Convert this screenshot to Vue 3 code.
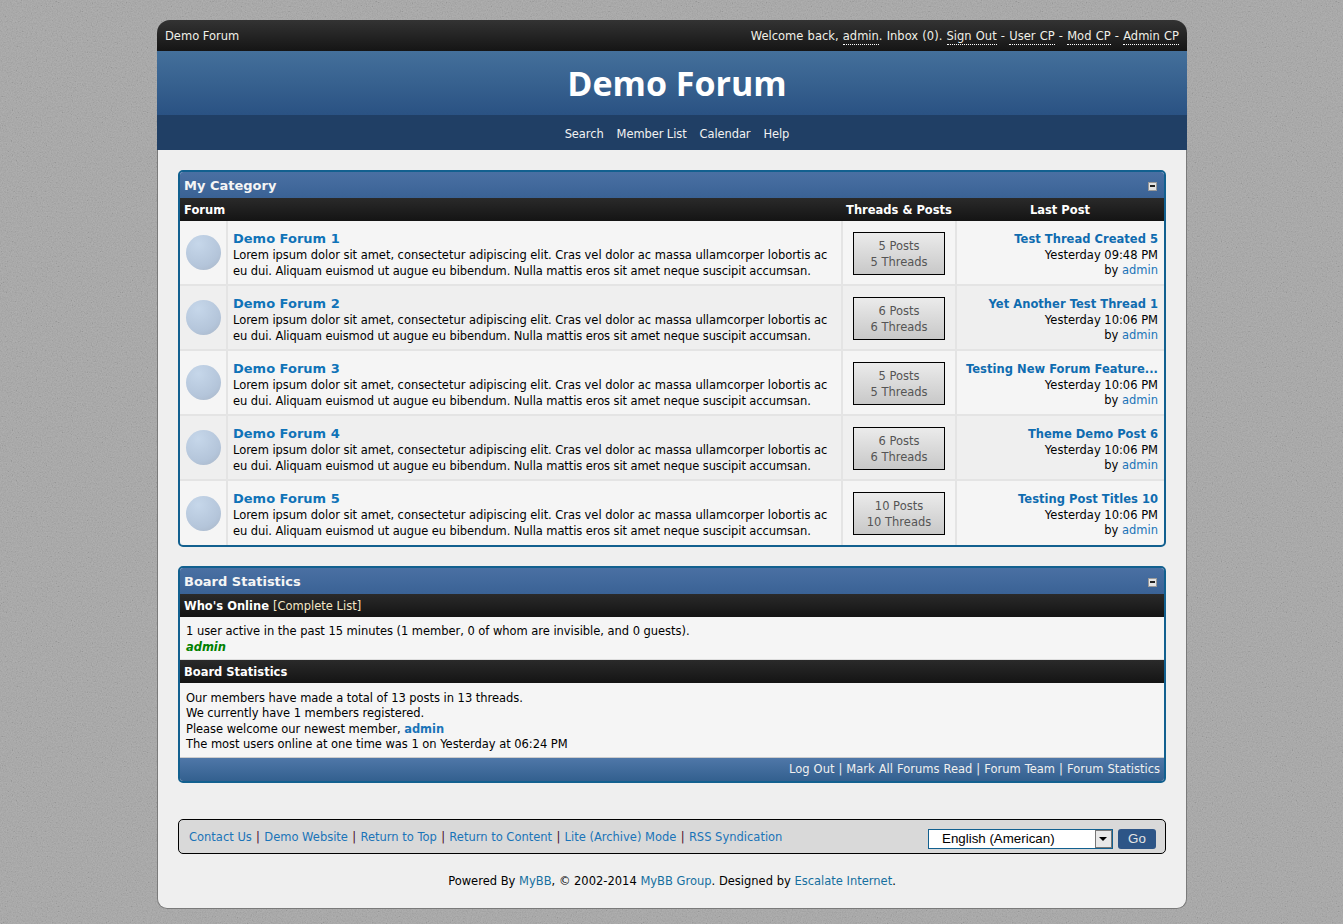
<template>
  <svg class="noise" aria-hidden="true">
    <filter id="grain" x="0" y="0" width="100%" height="100%">
      <feTurbulence type="fractalNoise" baseFrequency="0.8" numOctaves="2" seed="4" />
      <feColorMatrix type="matrix" values="1 1 0 0 -0.5  1 1 0 0 -0.5  1 1 0 0 -0.5  0 0 0 0 1" />
    </filter>
    <rect width="100%" height="100%" filter="url(#grain)" />
  </svg>
  <div class="wrapper">
    <div class="panel">
      <span class="panel-title">Demo Forum</span>
      <span class="welcome">
        Welcome back, <a class="dotted">admin</a>. Inbox (0). <a class="dotted">Sign Out</a> -
        <a class="dotted">User CP</a> - <a class="dotted">Mod CP</a> - <a class="dotted">Admin CP</a>
      </span>
    </div>
    <div class="logo">Demo Forum</div>
    <div class="menu">
      <a v-for="m in menu" :key="m">{{ m }}</a>
    </div>

    <div class="content">
      <div class="tborder">
        <div class="thead">
          <strong>My Category</strong>
          <span class="collapse"></span>
        </div>
        <div class="tcat forum-cols">
          <span>Forum</span>
          <span class="center">Threads &amp; Posts</span>
          <span class="center">Last Post</span>
        </div>
        <div
          v-for="(f, i) in forums"
          :key="f.name"
          class="forum-row"
          :class="i % 2 ? 'alt' : ''"
        >
          <div class="cell icon-cell"><span class="bulb"></span></div>
          <div class="cell desc-cell">
            <a class="forum-name">{{ f.name }}</a>
            <div class="lorem1">{{ lorem[0] }}</div>
            <div class="lorem2">{{ lorem[1] }}</div>
          </div>
          <div class="cell count-cell">
            <div class="count-box">
              <div>{{ f.posts }} Posts</div>
              <div>{{ f.posts }} Threads</div>
            </div>
          </div>
          <div class="cell last-cell">
            <a class="last-title">{{ f.last }}</a>
            <div>{{ f.time }}</div>
            <div>by <a class="blue">admin</a></div>
          </div>
        </div>
      </div>

      <div class="tborder stats">
        <div class="thead">
          <strong>Board Statistics</strong>
          <span class="collapse"></span>
        </div>
        <div class="tcat"><strong>Who's Online</strong> <span class="complete">[Complete List]</span></div>
        <div class="trow online">
          1 user active in the past 15 minutes (1 member, 0 of whom are invisible, and 0 guests).
          <div class="green">admin</div>
        </div>
        <div class="tcat"><strong>Board Statistics</strong></div>
        <div class="trow board">
          <div>Our members have made a total of 13 posts in 13 threads.</div>
          <div>We currently have 1 members registered.</div>
          <div>Please welcome our newest member, <a class="blue bold">admin</a></div>
          <div>The most users online at one time was 1 on Yesterday at 06:24 PM</div>
        </div>
        <div class="tfoot">Log Out | Mark All Forums Read | Forum Team | Forum Statistics</div>
      </div>

      <div class="footer-bar">
        <div class="foot-links">
          <template v-for="(l, i) in footLinks" :key="l">
            <a class="blue">{{ l }}</a><span v-if="i < footLinks.length - 1" class="sep">|</span>
          </template>
        </div>
        <div class="lang">
          <div class="select">
            <span>English (American)</span>
            <span class="arrow"></span>
          </div>
          <div class="go">Go</div>
        </div>
      </div>

      <div class="copyright">
        Powered By <a class="blue2">MyBB</a>, © 2002-2014 <a class="blue2">MyBB Group</a>. Designed by
        <a class="blue2">Escalate Internet</a>.
      </div>
    </div>
  </div>
</template>

<script setup>
const menu = ['Search', 'Member List', 'Calendar', 'Help']
const lorem = [
  'Lorem ipsum dolor sit amet, consectetur adipiscing elit. Cras vel dolor ac massa ullamcorper lobortis ac',
  'eu dui. Aliquam euismod ut augue eu bibendum. Nulla mattis eros sit amet neque suscipit accumsan.'
]
const forums = [
  { name: 'Demo Forum 1', posts: 5, last: 'Test Thread Created 5', time: 'Yesterday 09:48 PM' },
  { name: 'Demo Forum 2', posts: 6, last: 'Yet Another Test Thread 1', time: 'Yesterday 10:06 PM' },
  { name: 'Demo Forum 3', posts: 5, last: 'Testing New Forum Feature...', time: 'Yesterday 10:06 PM' },
  { name: 'Demo Forum 4', posts: 6, last: 'Theme Demo Post 6', time: 'Yesterday 10:06 PM' },
  { name: 'Demo Forum 5', posts: 10, last: 'Testing Post Titles 10', time: 'Yesterday 10:06 PM' }
]
const footLinks = ['Contact Us', 'Demo Website', 'Return to Top', 'Return to Content', 'Lite (Archive) Mode', 'RSS Syndication']
</script>

<style>
html {
  background: #a8a8a8;
}
body {
  margin: 0;
}
</style>

<style scoped>
.noise {
  position: fixed;
  inset: 0;
  width: 100%;
  height: 100%;
  opacity: 0.1;
  z-index: -1;
}
.wrapper {
  width: 1030px;
  margin: 20px 0 15px 157px;
  font-family: "DejaVu Sans", Verdana, sans-serif;
  font-size: 11.5px;
  color: #000;
}
.panel {
  height: 31px;
  box-sizing: border-box;
  padding: 0 8px;
  display: flex;
  justify-content: space-between;
  align-items: center;
  border-radius: 13px 13px 0 0;
  background: linear-gradient(#333, #151515);
  color: #f0f0e8;
}
.welcome {
  word-spacing: 0.55px;
}
.dotted {
  border-bottom: 1px dotted #fff;
  padding-bottom: 1px;
}
.logo {
  height: 64px;
  padding-left: 10px;
  background: linear-gradient(#44709b, #2a5283);
  color: #fff;
  font-family: "Open Sans", sans-serif;
  font-weight: 700;
  font-size: 34px;
  line-height: 64px;
  text-align: center;
}
.menu {
  height: 35px;
  background: #203f65;
  color: #f2f2f2;
  display: flex;
  justify-content: center;
  align-items: center;
  gap: 13px;
  padding: 2px 0 0 10px;
  letter-spacing: -0.1px;
  box-sizing: border-box;
}
.content {
  box-sizing: border-box;
  height: 759px;
  padding: 20px 20px 0;
  background: #efefef;
  border: 1px solid #7a7a7a;
  border-top: 0;
  border-radius: 0 0 10px 10px;
}
.tborder {
  border: 2px solid #12608f;
  border-radius: 5px;
  background: #f5f5f5;
  overflow: hidden;
}
.stats {
  margin-top: 19px;
}
.thead {
  height: 26px;
  padding: 0 7px 0 4px;
  display: flex;
  justify-content: space-between;
  align-items: center;
  background: linear-gradient(#4a70a3, #3a6295);
  color: #f5f5f5;
  font-size: 13px;
}
.thead strong {
  padding-top: 1px;
}
.collapse {
  box-sizing: border-box;
  width: 9px;
  height: 9px;
  margin-top: 3px;
  background: #e4e4e4;
  border: 1px solid #999;
  position: relative;
}
.collapse::after {
  content: "";
  position: absolute;
  left: 1px;
  right: 1px;
  top: 2px;
  height: 2px;
  background: #222;
}
.tcat {
  height: 23px;
  padding: 0 4px;
  display: flex;
  align-items: center;
  gap: 4px;
  background: linear-gradient(#2a2a2a, #141414);
  color: #fff;
  font-weight: 700;
}
.complete {
  font-weight: 400;
  color: #f5e8c8;
}
.forum-cols {
  display: grid;
  grid-template-columns: 658px 114px 208px;
  gap: 0;
}
.center {
  text-align: center;
}
.forum-row {
  display: grid;
  grid-template-columns: 48px 615px 114px 207px;
  height: 65px;
}
.forum-row:last-child {
  height: 64px;
}
.forum-row.alt {
  background: #efefef;
}
.cell {
  box-sizing: border-box;
  border-right: 2px solid #e4e4e4;
  border-bottom: 2px solid #e4e4e4;
}
.forum-row:last-child .cell {
  border-bottom: 0;
}
.icon-cell {
  display: flex;
  align-items: center;
  justify-content: center;
  padding-left: 1px;
}
.bulb {
  width: 35px;
  height: 35px;
  border-radius: 50%;
  background: radial-gradient(circle at 35% 25%, #c6d7ea, #b4c5da 65%, #a6b3c4);
}
.desc-cell {
  padding: 9px 5px 0;
  line-height: 15.5px;
}
.lorem1 {
  white-space: nowrap;
  letter-spacing: -0.04px;
}
.lorem2 {
  white-space: nowrap;
  letter-spacing: -0.09px;
}
.forum-name {
  display: block;
  font-size: 13px;
  font-weight: 700;
  color: #0f73b8;
  line-height: 18px;
}
.count-cell {
  display: flex;
  align-items: flex-start;
  justify-content: center;
  padding-top: 11px;
}
.count-box {
  box-sizing: border-box;
  width: 92px;
  height: 43px;
  border: 1px solid #000;
  background: linear-gradient(#ebebeb, #c8c8c8);
  color: #555;
  text-align: center;
  line-height: 15.5px;
  padding-top: 6.4px;
}
.last-cell {
  border-right: 0;
  text-align: right;
  padding: 11px 6px 0 0;
  line-height: 15.5px;
}
.last-title {
  display: block;
  font-weight: 700;
  letter-spacing: 0.03px;
  color: #0f6cb0;
}
.blue {
  color: #1a74b8;
}
.bold {
  font-weight: 700;
}
.trow {
  padding: 0 6px;
  line-height: 15.5px;
  letter-spacing: -0.04px;
}
.online {
  height: 43px;
  padding-top: 7px;
  box-sizing: border-box;
  border-bottom: 1px solid #ddd;
}
.green {
  color: #008000;
  font-weight: 700;
  font-style: italic;
}
.board {
  height: 74px;
  padding-top: 7.5px;
  box-sizing: border-box;
}
.tfoot {
  height: 24px;
  line-height: 23px;
  text-align: right;
  padding-right: 4px;
  background: linear-gradient(#4f77a8, #33608f);
  color: #f0f0f0;
  border-top: 1px solid #ccc;
  box-sizing: border-box;
  word-spacing: 0.35px;
}
.footer-bar {
  margin-top: 36px;
  height: 35px;
  box-sizing: border-box;
  border: 1px solid #000;
  border-radius: 5px;
  background: #d9d9d9;
  display: flex;
  justify-content: space-between;
  padding: 0 9px 0 10px;
}
.foot-links {
  padding-top: 10px;
  color: #4a0a2a;
}
.sep {
  margin: 0 4.3px;
}
.lang {
  display: flex;
  gap: 5px;
  padding-top: 9px;
  align-items: flex-start;
}
.select {
  box-sizing: border-box;
  width: 185px;
  height: 20px;
  border: 1px solid #12608f;
  background: #fff;
  display: flex;
  justify-content: space-between;
  padding-left: 13px;
  font-family: "Liberation Sans", Arial, sans-serif;
  font-size: 13.33px;
  line-height: 18px;
}
.arrow {
  width: 17px;
  height: 18px;
  box-sizing: border-box;
  border: 1px solid #777;
  background: #e8e8e8;
  position: relative;
}
.arrow::after {
  content: "";
  position: absolute;
  left: 3px;
  top: 6px;
  border: 4px solid transparent;
  border-top: 4px solid #000;
}
.go {
  width: 38px;
  height: 20px;
  background: #2d5587;
  border-radius: 3px;
  color: #e4e4e4;
  text-align: center;
  font-family: "Liberation Sans", Arial, sans-serif;
  font-size: 13.33px;
  line-height: 20px;
}
.copyright {
  text-align: center;
  margin-top: 20px;
}
.blue2 {
  color: #166f9f;
}
</style>
